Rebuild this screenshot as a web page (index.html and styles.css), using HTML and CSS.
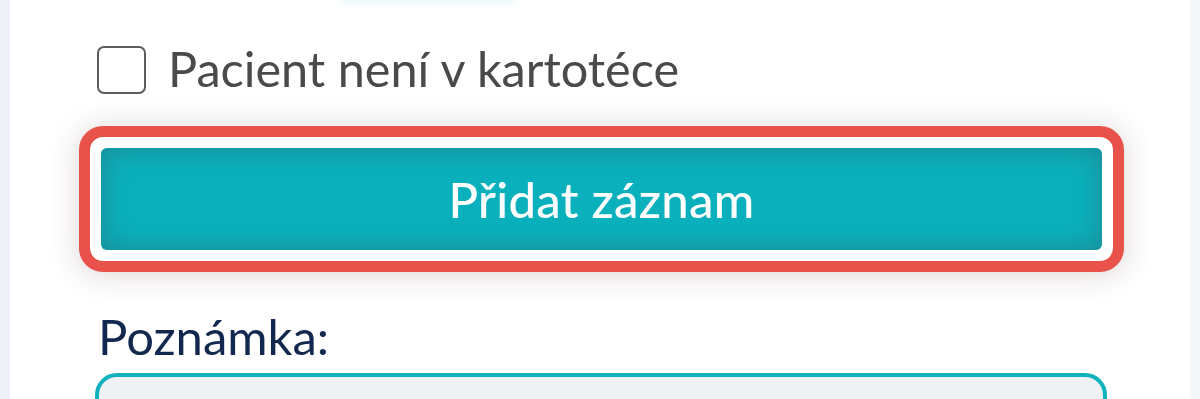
FILE: index.html
```html
<!DOCTYPE html>
<html lang="cs">
<head>
<meta charset="utf-8">
<title>Přidat záznam</title>
<link rel="stylesheet" href="styles.css">
</head>
<body>
<div class="page">
  <div class="strip-left"></div>
  <main class="card">
    <div class="top-glow"></div>
    <label class="check-row">
      <span class="checkbox"></span>
      <span class="check-label">Pacient není v kartotéce</span>
    </label>
    <div class="highlight">
      <button class="btn-primary" type="button">Přidat záznam</button>
    </div>
    <div class="field-label">Poznámka:</div>
    <div class="textarea"></div>
  </main>
  <div class="strip-right"></div>
</div>
</body>
</html>
```

FILE: styles.css
```css
html, body {
  margin: 0;
  padding: 0;
  height: 100%;
  overflow: hidden;
}
body {
  background: #f6f7f9;
  font-family: "Lato", "Noto Sans", sans-serif;
}
.page {
  display: grid;
  grid-template-columns: 10px 1fr 10px;
  height: 399px;
}
.strip-left {
  background: #eef1f8;
}
.strip-right {
  background: #f6f7f9;
}
.card {
  background: #ffffff;
  padding: 0 66px 0 69px;
  overflow: hidden;
  display: flex;
  flex-direction: column;
}
.card > * {
  flex-shrink: 0;
}
.top-glow {
  align-self: flex-start;
  margin-left: 260px;
  width: 180px;
  height: 20px;
  margin-top: -21px;
  border-radius: 10px;
  background: #e8fbfb;
  box-shadow: 0 3px 8px rgba(20, 180, 190, 0.12);
}
.check-row {
  display: flex;
  align-items: center;
  gap: 22px;
  margin: 47px 0 0 18px;
  height: 48px;
}
.checkbox {
  box-sizing: border-box;
  width: 49px;
  height: 48px;
  border: 2.5px solid #5c5c5c;
  border-radius: 7px;
  flex: none;
}
.check-label {
  font-size: 48.6px;
  color: #4a4a4a;
  line-height: 1;
  margin-top: -4px;
}
.highlight {
  margin-top: 32px;
  border: 11px solid #e8524a;
  border-radius: 24px;
  padding: 11px;
  background: #ffffff;
  box-shadow: 0 2px 26px 4px rgba(110, 70, 70, 0.18);
}
.btn-primary {
  display: block;
  width: 100%;
  height: 102px;
  border: none;
  border-radius: 6px;
  background: #0ab1bd;
  box-shadow: inset 0 0 26px 4px rgba(45, 100, 110, 0.42);
  color: #ffffff;
  font-family: "Lato", "Noto Sans", sans-serif;
  font-size: 49px;
  font-weight: 500;
  letter-spacing: 0.3px;
  padding: 0;
}
.field-label {
  margin: 40px 0 0 19px;
  font-size: 49px;
  line-height: 1;
  color: #13284f;
}
.textarea {
  margin: 12px 17px 0 16px;
  height: 80px;
  border: 4px solid #10b2bd;
  border-radius: 22px;
  background: #f0f1f5;
}
```
